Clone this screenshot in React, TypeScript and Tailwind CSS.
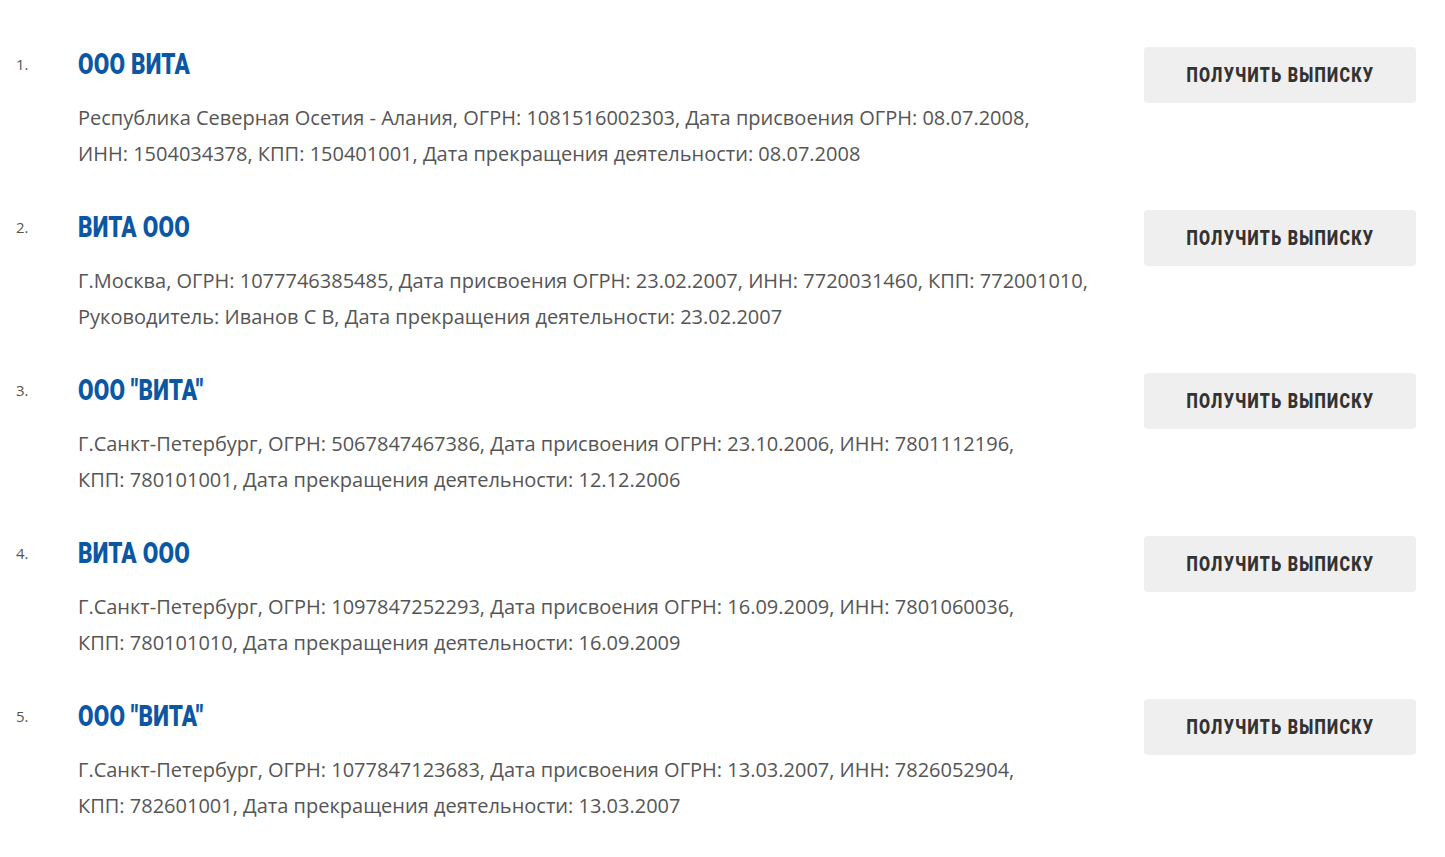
const companies = [
  {
    title: "ООО ВИТА",
    lines: [
      "Республика Северная Осетия - Алания, ОГРН: 1081516002303, Дата присвоения ОГРН: 08.07.2008,",
      "ИНН: 1504034378, КПП: 150401001, Дата прекращения деятельности: 08.07.2008",
    ],
  },
  {
    title: "ВИТА ООО",
    lines: [
      "Г.Москва, ОГРН: 1077746385485, Дата присвоения ОГРН: 23.02.2007, ИНН: 7720031460, КПП: 772001010,",
      "Руководитель: Иванов С В, Дата прекращения деятельности: 23.02.2007",
    ],
  },
  {
    title: 'ООО "ВИТА"',
    lines: [
      "Г.Санкт-Петербург, ОГРН: 5067847467386, Дата присвоения ОГРН: 23.10.2006, ИНН: 7801112196,",
      "КПП: 780101001, Дата прекращения деятельности: 12.12.2006",
    ],
  },
  {
    title: "ВИТА ООО",
    lines: [
      "Г.Санкт-Петербург, ОГРН: 1097847252293, Дата присвоения ОГРН: 16.09.2009, ИНН: 7801060036,",
      "КПП: 780101010, Дата прекращения деятельности: 16.09.2009",
    ],
  },
  {
    title: 'ООО "ВИТА"',
    lines: [
      "Г.Санкт-Петербург, ОГРН: 1077847123683, Дата присвоения ОГРН: 13.03.2007, ИНН: 7826052904,",
      "КПП: 782601001, Дата прекращения деятельности: 13.03.2007",
    ],
  },
];

export default function App() {
  return (
    <div className="w-full min-h-screen bg-white font-['Open_Sans',sans-serif] pt-[47px] pr-[29px]">
      <ol className="flex flex-col gap-[38px]">
        {companies.map((c, i) => (
          <li key={`company_${i}`} className="flex items-start">
            <div className="w-[78px] pl-[16px] text-[15px] leading-[36px] text-[#555] -mt-[1px]">{i + 1}.</div>
            <div className="flex-1 flex flex-col">
              <div className="h-[36px] leading-[36px]">
                <a
                  href="#"
                  className="inline-block origin-left scale-x-[0.75] font-['Roboto',sans-serif] font-black text-[30px] leading-[36px] tracking-[0.3px] text-[#0b57a4] whitespace-nowrap -mt-[1px]"
                >
                  {c.title}
                </a>
              </div>
              <div className="mt-[17px] text-[20px] leading-[36px] text-[#555]">
                {c.lines.map((l, j) => (
                  <div key={`line_${i}_${j}`} className="whitespace-nowrap">{l}</div>
                ))}
              </div>
            </div>
            <button className="w-[272px] h-[56px] rounded-[4px] bg-[#efefef] flex items-center justify-center">
              <span className="inline-block scale-x-[0.8] font-['Roboto',sans-serif] font-black text-[20px] tracking-[1.6px] text-[#333] whitespace-nowrap">
                ПОЛУЧИТЬ ВЫПИСКУ
              </span>
            </button>
          </li>
        ))}
      </ol>
    </div>
  );
}
